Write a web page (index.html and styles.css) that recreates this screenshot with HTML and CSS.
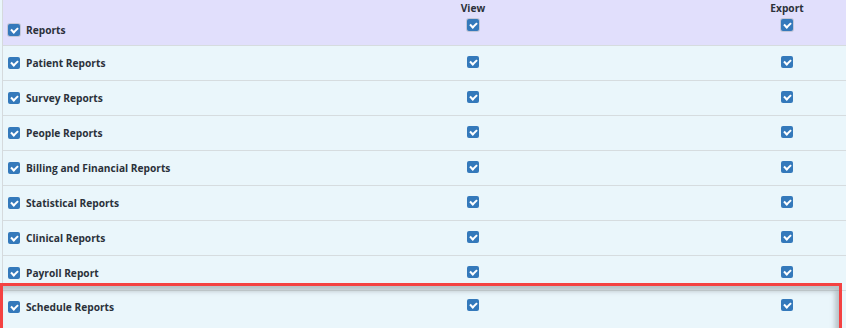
FILE: index.html
```html
<!DOCTYPE html>
<html lang="en">
<head>
    <meta charset="UTF-8">
    <title>Report permissions</title>
    <link rel="stylesheet" href="styles.css">
</head>
<body>
    <div class="perm_table">
        <div class="row head">
            <div class="name"><span class="cb ring"></span>Reports</div>
            <div class="col"><span class="title">View</span><span class="cb ring"></span></div>
            <div class="col"><span class="title">Export</span><span class="cb ring"></span></div>
        </div>
        <div class="row">
            <div class="name"><span class="cb"></span>Patient Reports</div>
            <div class="col"><span class="cb"></span></div>
            <div class="col"><span class="cb"></span></div>
        </div>
        <div class="row">
            <div class="name"><span class="cb"></span>Survey Reports</div>
            <div class="col"><span class="cb"></span></div>
            <div class="col"><span class="cb"></span></div>
        </div>
        <div class="row">
            <div class="name"><span class="cb"></span>People Reports</div>
            <div class="col"><span class="cb"></span></div>
            <div class="col"><span class="cb"></span></div>
        </div>
        <div class="row">
            <div class="name"><span class="cb"></span>Billing and Financial Reports</div>
            <div class="col"><span class="cb"></span></div>
            <div class="col"><span class="cb"></span></div>
        </div>
        <div class="row">
            <div class="name"><span class="cb"></span>Statistical Reports</div>
            <div class="col"><span class="cb"></span></div>
            <div class="col"><span class="cb"></span></div>
        </div>
        <div class="row">
            <div class="name"><span class="cb"></span>Clinical Reports</div>
            <div class="col"><span class="cb"></span></div>
            <div class="col"><span class="cb"></span></div>
        </div>
        <div class="row">
            <div class="name"><span class="cb"></span>Payroll Report</div>
            <div class="col"><span class="cb"></span></div>
            <div class="col"><span class="cb"></span></div>
        </div>
        <div class="row last">
            <div class="name"><span class="cb"></span>Schedule Reports</div>
            <div class="col"><span class="cb"></span></div>
            <div class="col"><span class="cb"></span></div>
        </div>
        <div class="mark"></div>
    </div>
</body>
</html>
```

FILE: styles.css
```css
*{
    margin:0;
    padding:0;
    box-sizing:border-box;
}
body{
    width:846px;
    height:328px;
    overflow:hidden;
    background-color:#eaf6fb;
    font-family:"Open Sans","Noto Sans",sans-serif;
    font-size:10.2px;
    font-weight:700;
    color:#2b313a;
}
.perm_table{
    position:relative;
    margin-left:2px;
    border-left:1px solid #d5dadd;
}
.row{
    display:grid;
    grid-template-columns:215px 510px 118px;
    height:35px;
    border-bottom:1px solid #d6dcdf;
    background-color:#eaf6fb;
}
.row.head{
    height:46px;
    background-color:#e1dffc;
}
.row.last{
    border-bottom:none;
    padding-bottom:4px;
}
.name{
    display:flex;
    align-items:center;
}
.head .name{
    padding-top:15px;
}
.col{
    display:flex;
    flex-direction:column;
    align-items:center;
    justify-content:center;
}
.head .col{
    justify-content:flex-start;
    padding-top:1px;
}
.title{
    display:block;
    height:21px;
    line-height:14px;
}
.cb{
    display:inline-block;
    position:relative;
    width:12px;
    height:12px;
    border-radius:2px;
    background-color:#3479bb;
    margin-left:5px;
    margin-right:6px;
}
.col .cb{
    margin:-3px 0 0 0;
}
.cb.ring{
    box-shadow:0 0 0 1px #c3c6d8;
}
.cb::after{
    content:"";
    position:absolute;
    left:3px;
    top:3px;
    width:5px;
    height:3px;
    border-left:2px solid white;
    border-bottom:2px solid white;
    transform:rotate(-45deg);
}
.mark{
    position:absolute;
    left:-3px;
    top:283px;
    width:842px;
    height:60px;
    border:3px solid #f44242;
    box-shadow:inset -4px 5px 5px rgba(90,100,105,0.35);
}
```
